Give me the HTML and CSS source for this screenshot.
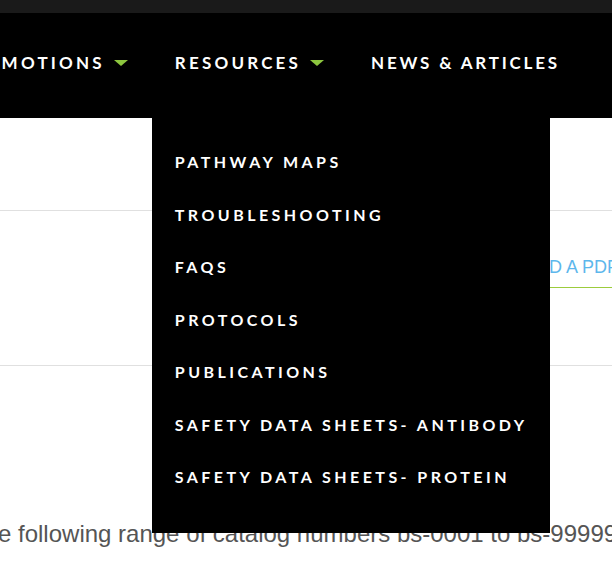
FILE: index.html
```html
<!DOCTYPE html>
<html lang="en">
<head>
<meta charset="utf-8">
<title>Resources menu</title>
<link rel="stylesheet" href="styles.css">
</head>
<body>
<div class="topbar"></div>
<header class="nav">
  <ul class="nav-list">
    <li class="nav-item">PROMOTIONS<span class="caret"></span></li>
    <li class="nav-item open">RESOURCES<span class="caret"></span>
      <ul class="dropdown">
        <li>PATHWAY MAPS</li>
        <li>TROUBLESHOOTING</li>
        <li>FAQS</li>
        <li>PROTOCOLS</li>
        <li>PUBLICATIONS</li>
        <li>SAFETY DATA SHEETS- ANTIBODY</li>
        <li>SAFETY DATA SHEETS- PROTEIN</li>
      </ul>
    </li>
    <li class="nav-item news">NEWS &amp; ARTICLES</li>
  </ul>
</header>
<main class="content">
  <div class="hero"></div>
  <div class="pdf-row">
    <a class="pdf-link">DOWNLOAD A PDF</a>
  </div>
  <p class="range">The following range of catalog numbers bs-0001 to bs-99999</p>
</main>
</body>
</html>
```

FILE: styles.css
```css
html, body {
  margin: 0;
  padding: 0;
  background: #fff;
  overflow: hidden;
  width: 612px;
  height: 576px;
}

.topbar {
  height: 13px;
  background: #1a1a1a;
}

.nav {
  height: 105px;
  background: #000;
  position: relative;
  z-index: 2;
}

.nav-list {
  list-style: none;
  margin: 0 0 0 -43px;
  padding: 0;
  display: flex;
  gap: 47px;
  height: 100%;
  align-items: center;
  font-family: Lato, "Noto Sans", sans-serif;
  font-weight: 700;
  font-size: 17px;
  letter-spacing: 3.2px;
  color: #fff;
  white-space: nowrap;
}

.nav-item {
  position: relative;
  display: flex;
  align-items: center;
  line-height: 20px;
  margin-top: -5px;
}

.nav-item.news {
  letter-spacing: 2.8px;
}

.caret {
  display: inline-block;
  width: 0;
  height: 0;
  margin-left: 9px;
  border-left: 7px solid transparent;
  border-right: 7px solid transparent;
  border-top: 6px solid #8dc63f;
}

.dropdown {
  position: absolute;
  left: -23px;
  top: 60px;
  width: 398px;
  box-sizing: border-box;
  list-style: none;
  margin: 0;
  padding: 23px 0 29px 23px;
  background: #000;
  font-size: 16px;
  letter-spacing: 3.45px;
}

.dropdown li {
  height: 52.5px;
  line-height: 52.5px;
}

.content {
  position: relative;
  z-index: 1;
}

.hero {
  height: 92px;
  border-bottom: 1px solid #e0e0e0;
}

.pdf-row {
  height: 154px;
  border-bottom: 1px solid #e0e0e0;
  display: flex;
  justify-content: flex-end;
  align-items: flex-start;
  overflow: hidden;
}

.pdf-link {
  margin-top: 46px;
  margin-right: -16px;
  padding: 0 10px 10px 20px;
  border-bottom: 1px solid #9ccc3c;
  font-family: "Liberation Sans", Arial, sans-serif;
  font-size: 18px;
  line-height: 20px;
  color: #5db7ec;
  white-space: nowrap;
}

.range {
  margin: 154px 0 0 -30px;
  font-family: "Liberation Sans", Arial, sans-serif;
  font-size: 24px;
  line-height: 28px;
  color: #555;
  white-space: nowrap;
}
```
